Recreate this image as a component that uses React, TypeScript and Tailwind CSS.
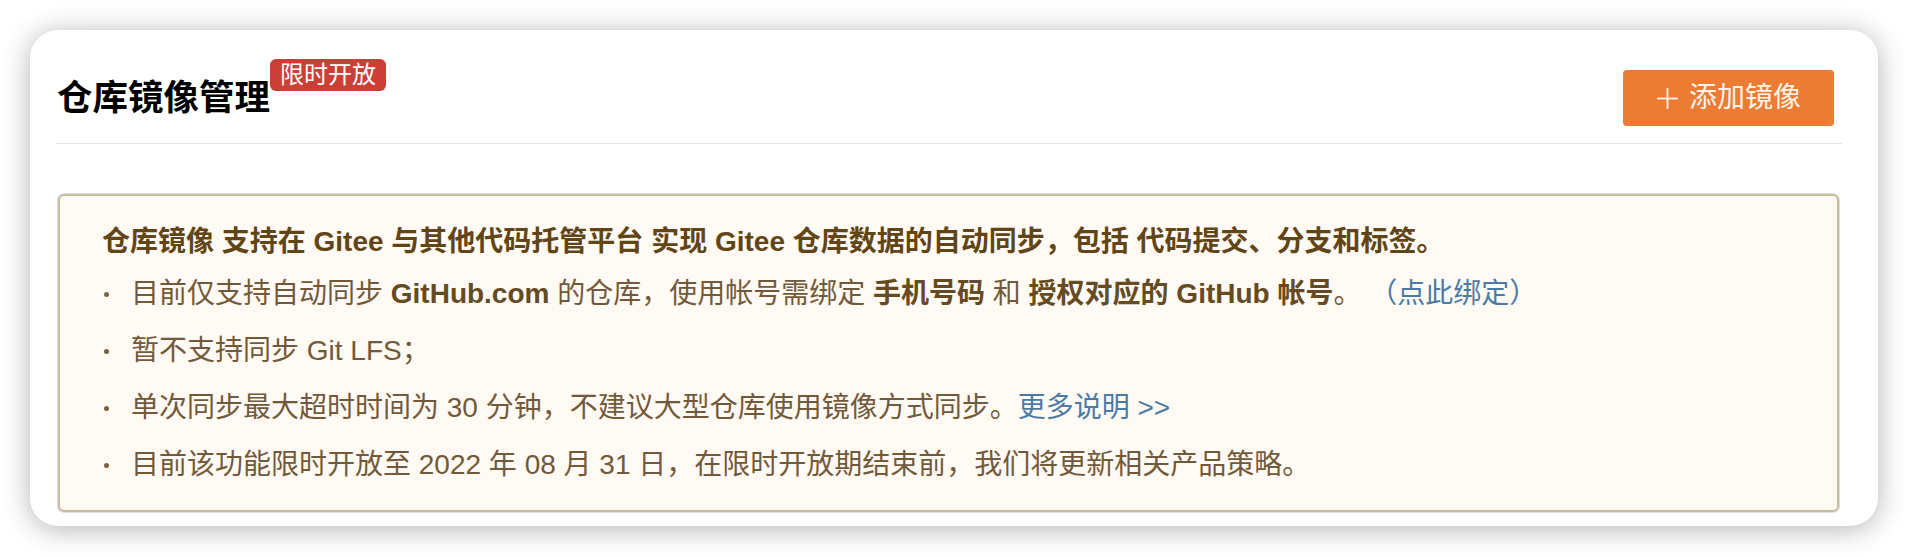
import React from 'react';

const Dot = () => (
  <span className="w-[29px] shrink-0 flex items-center">
    <span className="ml-[2px] w-[5px] h-[5px] rounded-full bg-[#7a6440]" />
  </span>
);

export default function App() {
  return (
    <div className="min-h-[556px] bg-white p-[30px] font-['Liberation_Sans','Noto_Sans_CJK_SC',sans-serif]">
      <div className="bg-white rounded-[28px] shadow-[0_3px_28px_rgba(0,0,0,0.3)] pl-[26px] pr-[36px] pb-[14px]">
        {/* header */}
        <div className="flex items-center justify-between pt-[40px] pb-[17px] border-b border-[#e4e4e4]">
          <div className="flex items-start pl-[1px]">
            <h1 className="text-[35.5px] leading-[44px] font-semibold text-black">仓库镜像管理</h1>
            <span className="-mt-[17px] h-[32px] px-[10px] rounded-[6px] bg-[#cb3f37] text-white text-[24px] leading-[32px]">
              限时开放
            </span>
          </div>
          <button className="mr-[8px] h-[56px] w-[211px] flex items-center justify-center gap-[10px] bg-[#ec7b34] rounded-[4px] text-[28px] text-[#fff4ea]">
            <svg width="23" height="23" viewBox="0 0 23 23" fill="none" stroke="currentColor" strokeWidth="1.8">
              <line x1="11.5" y1="1" x2="11.5" y2="22" />
              <line x1="1" y1="11.5" x2="22" y2="11.5" />
            </svg>
            <span>添加镜像</span>
          </button>
        </div>

        {/* notice */}
        <div className="mt-[50px] ml-[2px] mr-[3px] border-2 border-[#c9ba9b] rounded-[6px] bg-[#fffaf3] shadow-[0_0_0_1px_#dfe2e6] pt-[26px] pb-[25px] pl-[42px]">
          <p className="text-[28px] leading-[40px] font-semibold text-[#624516]">
            仓库镜像 支持在 Gitee 与其他代码托管平台 实现 Gitee 仓库数据的自动同步，包括 代码提交、分支和标签。
          </p>
          <ul className="mt-[12px] flex flex-col gap-[17px] text-[28px] leading-[40px] text-[#72593a]">
            <li className="flex items-center">
              <Dot />
              <span>
                目前仅支持自动同步 <b className="font-semibold text-[#654a22]">GitHub.com</b> 的仓库，使用帐号需绑定{' '}
                <b className="font-semibold text-[#654a22]">手机号码</b> 和{' '}
                <b className="font-semibold text-[#654a22]">授权对应的 GitHub 帐号</b>。{' '}
                <a className="text-[#4b7ba5]">（点此绑定）</a>
              </span>
            </li>
            <li className="flex items-center">
              <Dot />
              <span>暂不支持同步 Git LFS；</span>
            </li>
            <li className="flex items-center">
              <Dot />
              <span>
                单次同步最大超时时间为 30 分钟，不建议大型仓库使用镜像方式同步。<a className="text-[#4b7ba5]">更多说明 &gt;&gt;</a>
              </span>
            </li>
            <li className="flex items-center">
              <Dot />
              <span>目前该功能限时开放至 2022 年 08 月 31 日，在限时开放期结束前，我们将更新相关产品策略。</span>
            </li>
          </ul>
        </div>
      </div>
    </div>
  );
}
